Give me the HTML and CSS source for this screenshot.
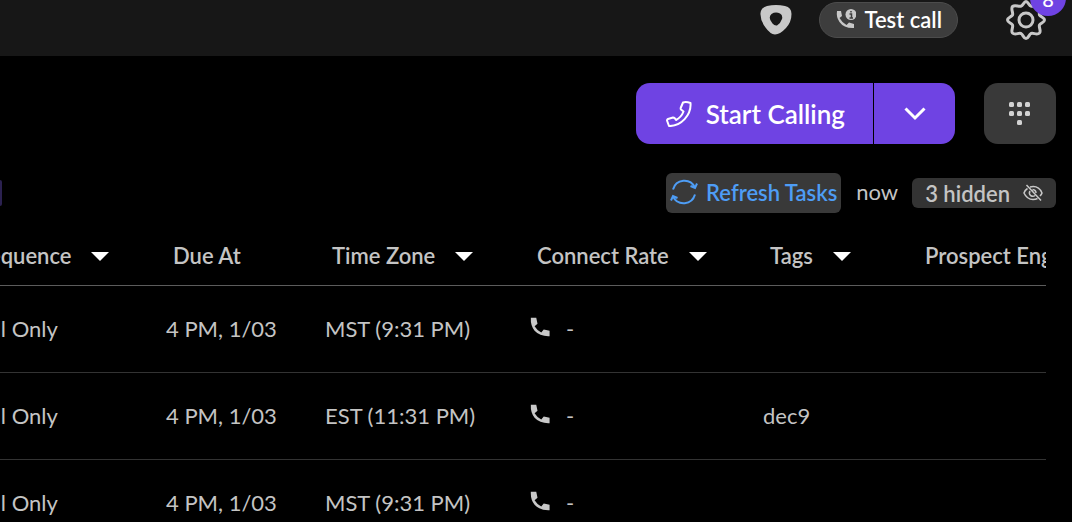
FILE: index.html
```html
<!DOCTYPE html>
<html lang="en">
<head>
  <meta charset="UTF-8" />
  <meta name="viewport" content="width=device-width, initial-scale=1" />
  <title>Call Tasks</title>
  <link rel="stylesheet" href="styles.css">
</head>
<body>
  <svg class="sprite" aria-hidden="true">
    <symbol id="phone" viewBox="0 0 24 24">
      <path d="M1 1 H7.500 L9 8 L5.500 11 Q8.500 16 13.500 18.500 L16.500 15 L23.500 16.500 V23 Q12 23.500 5.500 16.500 Q.5 10.500 1 1 Z" />
    </symbol>
  </svg>

  <header class="topbar">
    <svg class="logo" viewBox="0 0 32 30" role="img" aria-label="Logo">
      <path fill="#c8c8c8" fill-rule="evenodd" d="M7 1 Q16 -1 25 1 Q31.500 2.500 31.500 9 Q31.500 17 26 23 Q20 29.500 15 29.500 Q10 29 5.500 22.500 Q0 15 .5 8 Q1 2.500 7 1 Z M11.500 9 Q15.500 6.500 20 8.500 Q23 10 22 14 Q20.500 18.500 17 20.500 Q14.500 21 12.500 18.500 Q7.500 13 11.500 9 Z" />
    </svg>
    <button class="test-call" type="button">
      <svg class="test-icon" viewBox="0 0 20 20" aria-hidden="true">
        <path fill="#c8c8c8" d="M1 2 H5 L6 7 L3.500 9 Q6 13.500 10.500 16 L13 13.500 L18 15 V19 Q8 19.500 3.500 13 Q0 8 1 2 Z" />
        <circle cx="15" cy="5.500" r="5.500" fill="#c8c8c8" />
        <path d="M15 2 V3.500 M13.500 5 H15.500 V9 M13.500 9 H17" stroke="#3d3d3d" stroke-width="1.500" fill="none" />
      </svg>
      Test call
    </button>
    <button class="settings" type="button" aria-label="Settings">
      <svg viewBox="0 0 40 40" fill="none" stroke="#c8c8c8" stroke-width="3" stroke-linejoin="round" aria-hidden="true">
        <path d="M20 1.500 C22 1.500 23 5.500 25 6.200 C27 7 30 4.500 32.500 6.500 C35.500 9 32.500 12.500 33.500 15 C34.500 17 38.500 17.500 38.500 20 C38.500 22.500 34.500 23 33.500 25 C32.500 27.500 35.500 31 33.500 33 C31 35.500 27.500 32.500 25 33.500 C23 34.500 22.500 38.500 20 38.500 C17.500 38.500 17 34.500 15 33.500 C12.500 32.500 9 35.500 6.500 33 C4.500 31 7.500 27.500 6.500 25 C5.500 23 1.500 22.500 1.500 20 C1.500 17.500 5.500 17 6.500 15 C7.500 12.500 4.500 9 6.500 6.500 C9 4.500 12.500 7 15 6.200 C17 5.500 18 1.500 20 1.500 Z" />
        <circle cx="20" cy="20" r="7" />
      </svg>
      <span class="badge">8</span>
    </button>
  </header>

  <main>
    <div class="actions">
      <div class="call-group">
        <button class="start" type="button">
          <svg viewBox="0 0 26 26" aria-hidden="true">
            <path fill="none" stroke="#fff" stroke-width="2" stroke-linejoin="round" d="M17 1.500 Q20 .5 24.500 2 C25.500 14 15 25.500 3 25 L1 19.500 Q1 18.500 2 18 L7 16.500 Q8 16.500 9 17.500 L10 19 Q15.500 16 17.500 10.500 L15 8.500 Q14.500 8 14.700 7 Z" />
          </svg>
          Start Calling
        </button>
        <button class="more" type="button" aria-label="More calling options">
          <svg viewBox="0 0 22 14" aria-hidden="true"><path fill="none" stroke="#fff" stroke-width="3" d="M1.500 1.500 L11 11 L20.500 1.500" /></svg>
        </button>
      </div>
      <button class="dialpad" type="button" aria-label="Dialpad">
        <svg viewBox="0 0 22 24" fill="#d2d2d2" aria-hidden="true">
          <rect x="0" y="0" width="5" height="5" rx="1.500" />
          <rect x="8" y="0" width="5" height="5" rx="1.500" />
          <rect x="16" y="0" width="5" height="5" rx="1.500" />
          <rect x="0" y="9" width="5" height="5" rx="1.500" />
          <rect x="8" y="9" width="5" height="5" rx="1.500" />
          <rect x="16" y="9" width="5" height="5" rx="1.500" />
          <rect x="8" y="18" width="5" height="5" rx="1.500" />
        </svg>
      </button>
    </div>

    <div class="status">
      <span class="filter-chip"></span>
      <button class="refresh" type="button">
        <svg viewBox="0 0 28 26" fill="none" stroke="#4e9df5" stroke-width="2" aria-hidden="true">
          <path d="M3 10.500 C6 0 20 -1.500 25 8.500 M20.500 7 L25 9 L27 4.500 M25 15.500 C22 26 8 27.500 3 17.500 M7.500 19 L3 17 L1 21.500" />
        </svg>
        Refresh Tasks
      </button>
      <span class="updated">now</span>
      <button class="hidden-count" type="button">
        3 hidden
        <svg viewBox="0 0 20 18" fill="none" stroke="#c8c8c8" stroke-width="1.500" aria-hidden="true">
          <path d="M4.500 4.500 Q2 6 1 9 Q4 15.500 10 15.500 Q12.500 15.500 14.500 14.500 M7 3 Q15.500 1 19 9 Q18.500 10.500 17 12 M3.500 1 L18 16.500 M7 7 Q5.500 9.500 7.500 11.500 Q10 13 12 11.500 M9.500 5.500 Q13 6 13 9" />
        </svg>
      </button>
    </div>

    <div class="table-wrap">
      <table>
        <colgroup>
          <col class="col-sequence"><col class="col-due"><col class="col-zone"><col class="col-rate"><col class="col-tags"><col class="col-engage">
        </colgroup>
        <thead>
          <tr>
            <th>Sequence<i class="caret"></i></th>
            <th>Due At</th>
            <th>Time Zone<i class="caret"></i></th>
            <th>Connect Rate<i class="caret"></i></th>
            <th>Tags<i class="caret"></i></th>
            <th>Prospect Engagement</th>
          </tr>
        </thead>
        <tbody>
          <tr>
            <td>Call Only</td>
            <td>4 PM, 1/03</td>
            <td>MST (9:31 PM)</td>
            <td><svg class="phone"><use href="#phone" /></svg>-</td>
            <td></td>
            <td></td>
          </tr>
          <tr>
            <td>Call Only</td>
            <td>4 PM, 1/03</td>
            <td>EST (11:31 PM)</td>
            <td><svg class="phone"><use href="#phone" /></svg>-</td>
            <td>dec9</td>
            <td></td>
          </tr>
          <tr>
            <td>Call Only</td>
            <td>4 PM, 1/03</td>
            <td>MST (9:31 PM)</td>
            <td><svg class="phone"><use href="#phone" /></svg>-</td>
            <td></td>
            <td></td>
          </tr>
        </tbody>
      </table>
    </div>
  </main>
</body>
</html>
```

FILE: styles.css
```css
* {
  box-sizing: border-box;
}
body {
  margin: 0;
  background: #000;
  color: #c4c4c4;
  font-family: Lato, sans-serif;
  font-size: 22px;
  overflow: hidden;
}
button {
  display: flex;
  align-items: center;
  border: none;
  padding: 0;
  font-family: inherit;
  font-size: 22px;
  font-weight: 600;
  cursor: pointer;
}
svg {
  display: block;
  flex-shrink: 0;
}
.sprite {
  display: none;
}

/* top bar */
.topbar {
  display: flex;
  justify-content: flex-end;
  height: 56px;
  padding-right: 26px;
  background: #171717;
}
.logo {
  width: 32px;
  height: 30px;
  margin: 5px 27px 0 0;
}
.test-call {
  height: 36px;
  margin: 2px 48px 0 0;
  padding: 0 15px 2px 16px;
  gap: 8px;
  border: 1px solid #4c4c4c;
  border-radius: 18px;
  background: #3d3d3d;
  color: #fff;
}
.test-icon {
  width: 20px;
  height: 20px;
}
.settings {
  position: relative;
  width: 40px;
  height: 40px;
  background: none;
}
.settings svg {
  width: 40px;
  height: 40px;
}
.badge {
  position: absolute;
  top: -20px;
  right: -20px;
  width: 36px;
  height: 36px;
  border-radius: 50%;
  background: #6f43e3;
  color: #fff;
  font-size: 20px;
  font-weight: 500;
  line-height: 38px;
  text-align: center;
}

/* calling buttons */
.actions {
  display: flex;
  justify-content: flex-end;
  gap: 29px;
  padding: 27px 16px 0 0;
}
.call-group {
  display: flex;
  gap: 1px;
}
.start {
  height: 61px;
  padding: 0 28px 0 30px;
  gap: 14px;
  border-radius: 14px 0 0 14px;
  background: #6f43e3;
  color: #fff;
  font-size: 26px;
}
.start svg {
  width: 26px;
  height: 26px;
}
.more {
  justify-content: center;
  width: 81px;
  border-radius: 0 14px 14px 0;
  background: #6f43e3;
}
.more svg {
  width: 22px;
  height: 14px;
}
.dialpad {
  justify-content: center;
  width: 72px;
  border-radius: 14px;
  background: #393939;
}
.dialpad svg {
  width: 22px;
  height: 24px;
}

/* refresh and hidden rows */
.status {
  display: flex;
  align-items: center;
  justify-content: flex-end;
  padding: 29px 16px 0 0;
}
.filter-chip {
  width: 2px;
  height: 26px;
  margin-right: auto;
  border-radius: 0 6px 6px 0;
  background: #2b2150;
}
.refresh {
  height: 40px;
  padding: 0 4px 2px;
  gap: 8px;
  border-radius: 6px;
  background: #393939;
  color: #4e9df5;
}
.refresh svg {
  width: 28px;
  height: 26px;
}
.updated {
  margin: 0 14px 0 15px;
  padding-bottom: 4px;
}
.hidden-count {
  height: 30px;
  padding: 0 13px;
  gap: 13px;
  border-radius: 6px;
  background: #333;
  color: #c4c4c4;
}
.hidden-count svg {
  width: 20px;
  height: 18px;
}

/* task table */
.table-wrap {
  margin-top: 13px;
  margin-right: 26px;
  overflow: hidden;
}
table {
  width: 1200px;
  margin-left: -30px;
  table-layout: fixed;
  border-collapse: collapse;
}
.col-sequence {
  width: 196px;
}
.col-due {
  width: 159px;
}
.col-zone {
  width: 205px;
}
.col-rate {
  width: 233px;
}
.col-tags {
  width: 155px;
}
th {
  height: 59px;
  padding: 0 0 0 7px;
  border-bottom: 1px solid #5c5c5c;
  font-weight: 600;
  text-align: left;
  white-space: nowrap;
}
td {
  height: 87px;
  padding: 0;
  border-bottom: 1px solid #333;
  white-space: nowrap;
}
.caret {
  display: inline-block;
  margin-left: 20px;
  border: 9px solid transparent;
  border-top-color: #fff;
  border-bottom: none;
  vertical-align: 3px;
}
.phone {
  display: inline-block;
  width: 20px;
  height: 20px;
  margin: 0 16px 0 0;
  fill: #c8c8c8;
}
```
